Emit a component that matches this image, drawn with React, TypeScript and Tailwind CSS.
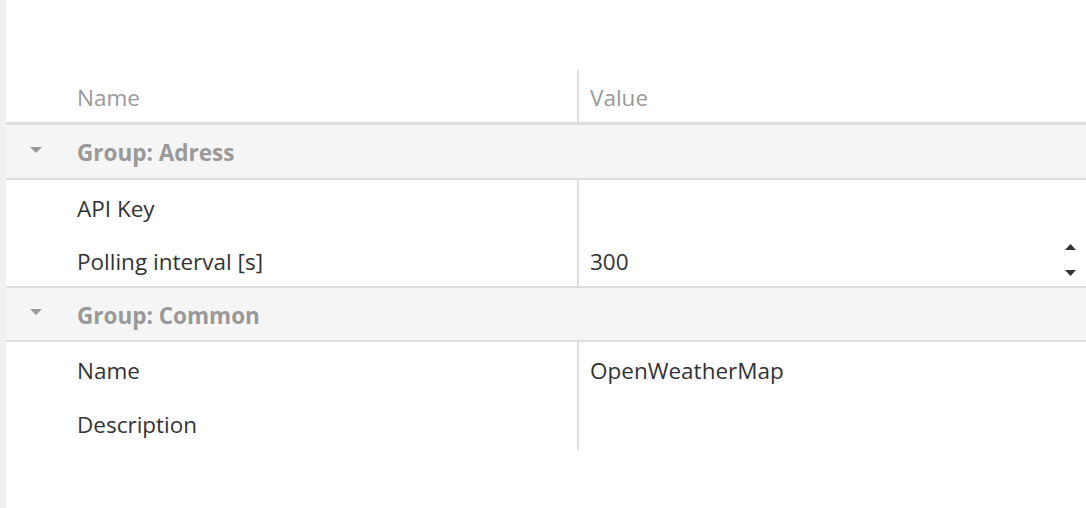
import React from "react";

type Row = { name: string; value?: string; spinner?: boolean };

const groups: { title: string; rows: Row[]; h: string }[] = [
  {
    title: "Group: Adress",
    h: "h-[55px]",
    rows: [
      { name: "API Key", value: "" },
      { name: "Polling interval [s]", value: "300", spinner: true },
    ],
  },
  {
    title: "Group: Common",
    h: "h-[54px]",
    rows: [
      { name: "Name", value: "OpenWeatherMap" },
      { name: "Description", value: "" },
    ],
  },
];

function Caret() {
  return (
    <svg width="12" height="6" viewBox="0 0 12 6" className="fill-[#999]">
      <path d="M0 0h12L6 6z" />
    </svg>
  );
}

function Spinner() {
  return (
    <div className="absolute right-[10px] top-0 bottom-0 flex flex-col justify-between py-[10px]">
      <svg width="11" height="6" viewBox="0 0 11 6" className="fill-[#333]">
        <path d="M5.5 0L11 6H0z" />
      </svg>
      <svg width="11" height="6" viewBox="0 0 11 6" className="fill-[#333]">
        <path d="M0 0h11L5.5 6z" />
      </svg>
    </div>
  );
}

export default function App() {
  return (
    <div
      className="flex h-[508px] w-[1086px] bg-white text-[22.5px] text-[#333]"
      style={{ fontFamily: '"Open Sans", "Noto Sans", sans-serif' }}
    >
      <div className="w-[6px] shrink-0 bg-[#f0f0f0]" />
      <div className="flex-1 pt-[70px]">
        <div className="flex h-[55px] items-center border-b-[3px] border-[#ddd] text-[#999]">
          <div className="flex h-full w-[573px] items-center border-r-2 border-[#ddd] pl-[71px] pt-[3px]">Name</div>
          <div className="pl-[11px] pt-[3px]">Value</div>
        </div>
        {groups.map((g, gi) => (
          <div key={g.title}>
            <div className={`flex ${g.h} items-center border-b-2 border-[#ddd] bg-[#f5f5f5] font-bold text-[#999]`}>
              <div className="flex w-[71px] justify-center pb-[4px] pr-[12px]">
                <Caret />
              </div>
              <span className="pt-[3px]">{g.title}</span>
            </div>
            {g.rows.map((r, i) => (
              <div
                key={r.name}
                className={`flex h-[54px] items-center ${i === g.rows.length - 1 && gi === 0 ? "border-b-2 border-[#ddd]" : ""}`}
              >
                <div className="flex h-full w-[573px] items-center border-r-2 border-[#ddd] pl-[71px] pt-[3px]">{r.name}</div>
                <div className="relative flex h-full flex-1 items-center pl-[11px] pt-[3px]">
                  {r.value}
                  {r.spinner && <Spinner />}
                </div>
              </div>
            ))}
          </div>
        ))}
      </div>
    </div>
  );
}
